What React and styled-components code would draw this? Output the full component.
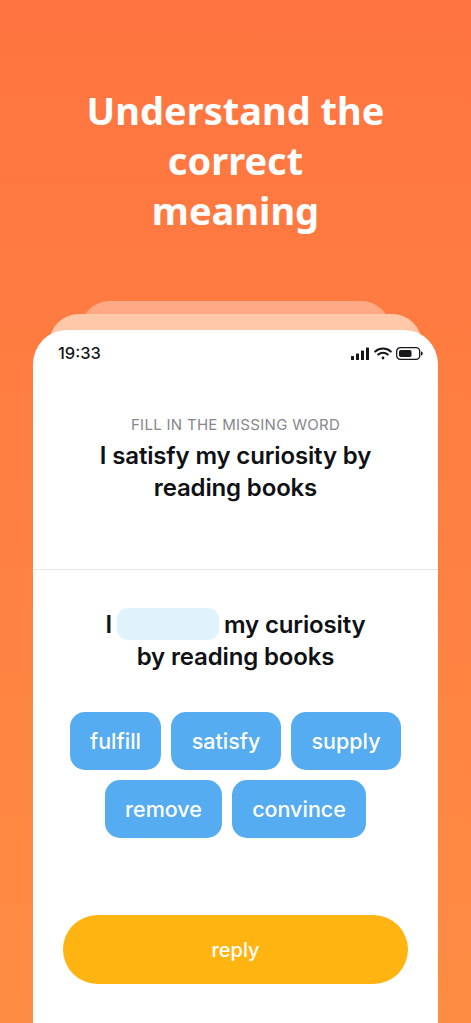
import styled, { createGlobalStyle } from 'styled-components'

const GlobalStyle = createGlobalStyle`
html, body {
  margin: 0;
  padding: 0;
}
body {
  font-family: "Inter", "Liberation Sans", sans-serif;
}
`

const Page = styled.div`
width: 471px;
height: 1023px;
overflow: hidden;
display: flex;
flex-direction: column;
align-items: center;
background: linear-gradient(180deg, #ff7440 0%, #ff8c43 100%);
`

const Title = styled.h1`
width: 100%;
flex-shrink: 0;
margin: 0;
padding-top: 85px;
height: 301px;
box-sizing: border-box;
text-align: center;
font-family: "Noto Sans", "Open Sans", sans-serif;
font-size: 38px;
line-height: 50px;
font-weight: 700;
color: #fff;
`

const Peek = styled.div`
width: ${props => props.$width}px;
height: 40px;
margin-bottom: ${props => props.$overlap}px;
flex-shrink: 0;
border-radius: 30px 30px 0 0;
background: ${props => props.$color};
`

const Card = styled.div`
width: 405px;
flex: 1;
min-height: 0;
display: flex;
flex-direction: column;
background: #fff;
border-radius: 34px 34px 0 0;
`

const StatusBar = styled.div`
height: 46px;
flex-shrink: 0;
padding: 0 15px 0 25px;
display: flex;
align-items: center;
justify-content: space-between;
`

const Time = styled.span`
font-size: 16.5px;
font-weight: 500;
color: #16171a;
`

const StatusIcons = styled.div`
display: flex;
align-items: center;
gap: 4px;
`

const Prompt = styled.div`
height: 194px;
flex-shrink: 0;
padding-top: 40px;
box-sizing: border-box;
border-bottom: 1px solid #e4e6e8;
text-align: center;
`

const Hint = styled.div`
font-size: 15px;
line-height: 17px;
letter-spacing: 0.3px;
color: #85878b;
`

const Sentence = styled.div`
margin-top: ${props => props.$top || 0}px;
font-size: 24px;
line-height: 32px;
font-weight: 600;
letter-spacing: -0.15px;
color: #101114;
text-align: center;
`

const Blank = styled.span`
display: inline-block;
width: 102px;
height: 32px;
margin: 0 5px 0 5px;
vertical-align: -7px;
border-radius: 11px;
background: #e0f3fd;
`

const Options = styled.div`
margin-top: 39px;
display: flex;
flex-wrap: wrap;
justify-content: center;
gap: 10px;
padding: 0 37px;
`

const Option = styled.button`
width: ${props => props.$width}px;
height: 58px;
padding: 0;
border: none;
border-radius: 15px;
background: #55acf0;
color: #fff;
font-family: inherit;
font-size: 21.5px;
font-weight: 500;
`

const ReplyButton = styled.button`
width: 345px;
height: 69px;
flex-shrink: 0;
margin: 77px 0 0 30px;
padding: 0;
border: none;
border-radius: 35px;
background: #ffb412;
color: #fff;
font-family: inherit;
font-size: 20px;
font-weight: 500;
`

const optionRows = [
  ['fulfill', 91],
  ['satisfy', 110],
  ['supply', 110],
  ['remove', 117],
  ['convince', 134],
]

function Signal() {
  return (
    <svg width="19" height="13" viewBox="0 0 19 13">
      <rect x="0" y="9" width="3" height="4" rx="0.6" fill="#16171a" />
      <rect x="5" y="6.5" width="3" height="6.5" rx="0.6" fill="#16171a" />
      <rect x="10" y="3.5" width="3" height="9.5" rx="0.6" fill="#16171a" />
      <rect x="15" y="0.5" width="3" height="12.5" rx="0.6" fill="#16171a" />
    </svg>
  )
}

function Wifi() {
  return (
    <svg width="18" height="13" viewBox="0 0 18 13" fill="none" stroke="#16171a" strokeWidth="2" strokeLinecap="round">
      <path d="M1.2 4.6C5.6 .6 12.4 .6 16.8 4.6" />
      <path d="M4.2 7.6C6.9 5.2 11.1 5.2 13.8 7.6" />
      <circle cx="9" cy="11" r="1.4" fill="#16171a" stroke="none" />
    </svg>
  )
}

function Battery() {
  return (
    <svg width="27" height="13" viewBox="0 0 27 13">
      <rect x="0.7" y="0.7" width="23" height="11.6" rx="3.6" fill="none" stroke="#16171a" strokeWidth="1.3" />
      <rect x="3" y="3" width="12.5" height="7" rx="1.8" fill="#16171a" />
      <path d="M25 4.4C26.2 4.8 26.8 5.6 26.8 6.5C26.8 7.4 26.2 8.2 25 8.6Z" fill="#16171a" />
    </svg>
  )
}

function App() {
  return (
    <Page>
      <GlobalStyle />
      <Title>Understand the<br />correct<br />meaning</Title>
      <Peek $width={311} $overlap={-27} $color="#ffa985" />
      <Peek $width={373} $overlap={-24} $color="#ffc8a8" />
      <Card>
        <StatusBar>
          <Time>19:33</Time>
          <StatusIcons>
            <Signal />
            <Wifi />
            <Battery />
          </StatusIcons>
        </StatusBar>
        <Prompt>
          <Hint>FILL IN THE MISSING WORD</Hint>
          <Sentence $top={7}>I satisfy my curiosity by<br />reading books</Sentence>
        </Prompt>
        <Sentence $top={38}>I<Blank />my curiosity<br />by reading books</Sentence>
        <Options>
          {optionRows.map(([label, width]) => (
            <Option key={label} $width={width}>{label}</Option>
          ))}
        </Options>
        <ReplyButton>reply</ReplyButton>
      </Card>
    </Page>
  )
}

export default App
